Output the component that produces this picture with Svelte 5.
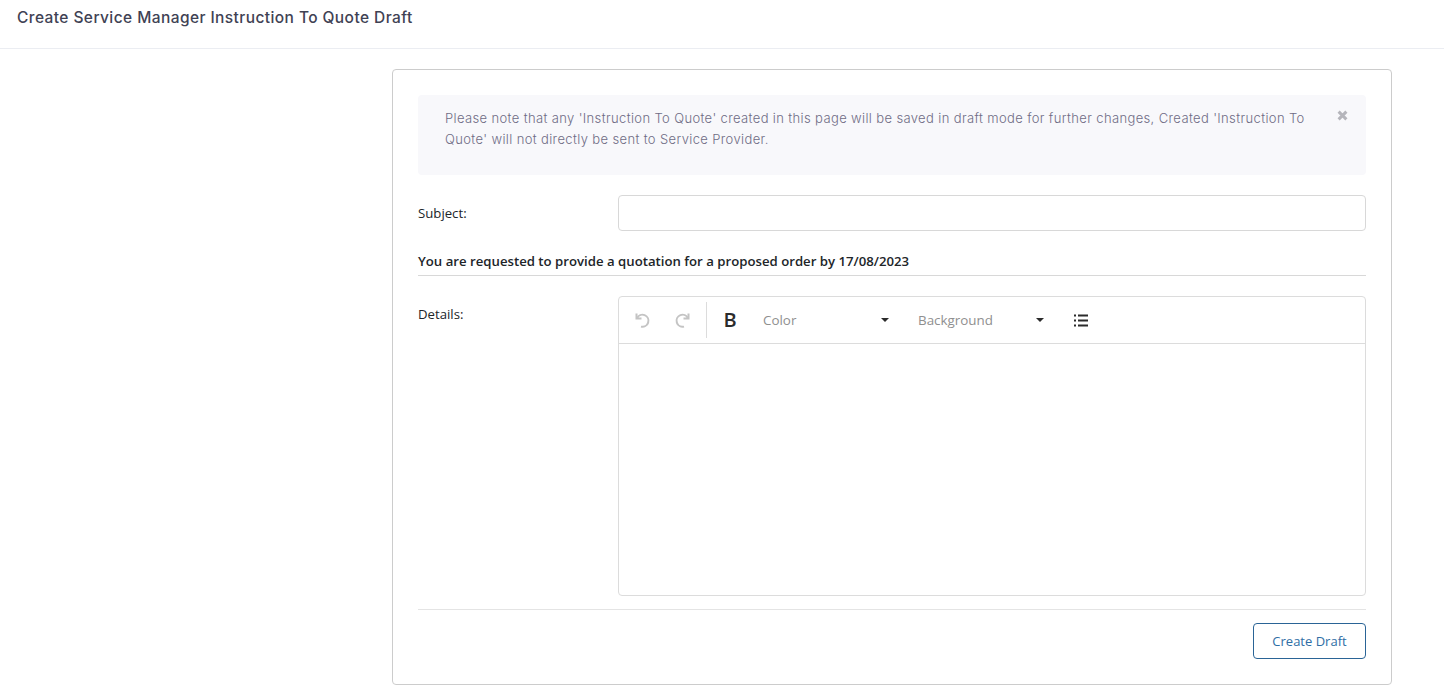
<script>
  let subject = $state('');
  let details = $state('');
  let showNote = $state(true);
</script>

<header class="page-head">
  <h1>Create Service Manager Instruction To Quote Draft</h1>
</header>

<main class="page-body">
  <section class="card">
    {#if showNote}
      <div class="note">
        <p>Please note that any 'Instruction To Quote' created in this page will be saved in draft mode for further changes, Created 'Instruction To Quote' will not directly be sent to Service Provider.</p>
        <button class="note-close" aria-label="Close" onclick={() => (showNote = false)}>
          <svg width="11" height="11" viewBox="0 0 11 11"><path d="M1.6 1.6l7.8 7.8M9.4 1.6l-7.8 7.8" stroke="#b5b5bb" stroke-width="3" fill="none"/></svg>
        </button>
      </div>
    {/if}

    <div class="row subject-row">
      <label for="subject">Subject:</label>
      <input id="subject" type="text" bind:value={subject} />
    </div>

    <h2 class="request">You are requested to provide a quotation for a proposed order by 17/08/2023</h2>

    <div class="row details-row">
      <span class="label">Details:</span>
      <div class="editor">
        <div class="toolbar">
          <div class="tool-group history">
            <button class="tool" aria-label="Undo">
              <svg width="18" height="18" viewBox="0 0 18 18" fill="none" stroke="#c4c4c4" stroke-width="2"><path d="M3.5 2.5v5h5"/><path d="M4 7.2A6 6 0 1 1 8 15.6"/></svg>
            </button>
            <button class="tool" aria-label="Redo">
              <svg width="18" height="18" viewBox="0 0 18 18" fill="none" stroke="#c4c4c4" stroke-width="2"><path d="M14.5 2.5v5h-5"/><path d="M14 7.2A6 6 0 1 0 10 15.6"/></svg>
            </button>
          </div>
          <div class="tool-group formats">
            <button class="tool bold">B</button>
            <button class="picker color"><span>Color</span><i class="caret"></i></button>
            <button class="picker background"><span>Background</span><i class="caret"></i></button>
            <button class="tool list" aria-label="Bullet list">
              <svg width="14" height="13" viewBox="0 0 14 13" fill="#2b2b2b"><rect x="0" y="0.5" width="2" height="2"/><rect x="0" y="5.5" width="2" height="2"/><rect x="0" y="10.5" width="2" height="2"/><rect x="4" y="0.5" width="10" height="2"/><rect x="4" y="5.5" width="10" height="2"/><rect x="4" y="10.5" width="10" height="2"/></svg>
            </button>
          </div>
        </div>
        <textarea class="editor-body" aria-label="Details" bind:value={details}></textarea>
      </div>
    </div>

    <footer class="actions">
      <button class="create">Create Draft</button>
    </footer>
  </section>
</main>

<style>
  :global(body) {
    background: #fff;
    font-family: "Open Sans", "Liberation Sans", sans-serif;
    color: #212529;
  }

  .page-head {
    height: 48px;
    box-sizing: content-box;
    border-bottom: 1px solid #ebedf2;
    padding-left: 17px;
  }

  h1 {
    margin: 0;
    padding-top: 8px;
    font-family: Inter, sans-serif;
    font-size: 15.5px;
    letter-spacing: 0.42px;
    line-height: 20px;
    font-weight: 500;
    color: #3f4254;
  }

  .page-body {
    display: flex;
    justify-content: flex-end;
    padding: 20px 52px 15px 0;
  }

  .card {
    width: 1000px;
    height: 616px;
    box-sizing: border-box;
    border: 1px solid #ccc;
    border-radius: 4px;
    padding: 25px;
  }

  .note {
    display: flex;
    justify-content: space-between;
    height: 80px;
    box-sizing: border-box;
    padding: 13px 18px 0 27px;
    background: #f8f8fb;
    border-radius: 4px;
  }

  .note p {
    margin: 0;
    width: 870px;
    font-family: Inter, sans-serif;
    font-weight: 300;
    font-size: 13px;
    letter-spacing: 0.37px;
    line-height: 21px;
    color: #6f6c85;
  }

  .note-close {
    align-self: flex-start;
    border: 0;
    background: none;
    padding: 1px 0 0;
    height: 14px;
    line-height: 0;
  }

  .row {
    display: grid;
    grid-template-columns: 200px 1fr;
  }

  .row label,
  .label {
    font-size: 13.2px;
    color: #212529;
  }

  .subject-row {
    margin-top: 20px;
    align-items: center;
  }

  .subject-row input {
    height: 36px;
    box-sizing: border-box;
    border: 1px solid #d8d8d8;
    border-radius: 4px;
    outline: none;
  }

  .request {
    margin: 21px 0 0;
    padding-bottom: 4px;
    border-bottom: 1px solid #d8d8d8;
    font-size: 13.2px;
    line-height: 19px;
    font-weight: 600;
    color: #212529;
  }

  .details-row {
    margin-top: 20px;
  }

  .details-row .label {
    padding-top: 9px;
    line-height: 18px;
  }

  .editor {
    display: flex;
    flex-direction: column;
    height: 300px;
    box-sizing: border-box;
    border: 1px solid #dcdcdc;
    border-radius: 4px;
  }

  .toolbar {
    display: flex;
    align-items: center;
    height: 47px;
    flex: none;
    box-sizing: border-box;
    border-bottom: 1px solid #dcdcdc;
  }

  .tool-group {
    display: flex;
    align-items: center;
  }

  .history {
    height: 36px;
    width: 88px;
    box-sizing: border-box;
    padding-left: 14px;
    gap: 23px;
    border-right: 1px solid #dcdcdc;
  }

  .tool {
    border: 0;
    background: none;
    padding: 0;
    display: flex;
    align-items: center;
    justify-content: center;
    line-height: 0;
  }

  .bold {
    width: 46px;
    font-family: "Open Sans", sans-serif;
    font-size: 20px;
    font-weight: 600;
    line-height: 20px;
    color: #2b2b2b;
  }

  .picker {
    display: flex;
    align-items: center;
    justify-content: space-between;
    border: 0;
    background: none;
    padding: 0;
    font-family: inherit;
    font-size: 13.4px;
    color: #8f8f8f;
  }

  .color {
    width: 126px;
    margin-left: 10px;
    margin-right: 29px;
  }

  .background {
    width: 126px;
  }

  .caret {
    width: 0;
    height: 0;
    border-left: 4px solid transparent;
    border-right: 4px solid transparent;
    border-top: 4px solid #2b2b2b;
  }

  .list {
    margin-left: 30px;
  }

  .editor-body {
    flex: 1;
    border: 0;
    outline: none;
    resize: none;
    background: none;
    border-radius: 0 0 4px 4px;
  }

  .actions {
    display: flex;
    justify-content: flex-end;
    margin-top: 13px;
    padding-top: 13px;
    border-top: 1px solid #e4e4e4;
  }

  .create {
    width: 113px;
    height: 36px;
    border: 1px solid #2a6496;
    border-radius: 4px;
    background: #fff;
    font-family: "Open Sans", sans-serif;
    font-size: 13px;
    color: #2f6ea5;
  }
</style>
